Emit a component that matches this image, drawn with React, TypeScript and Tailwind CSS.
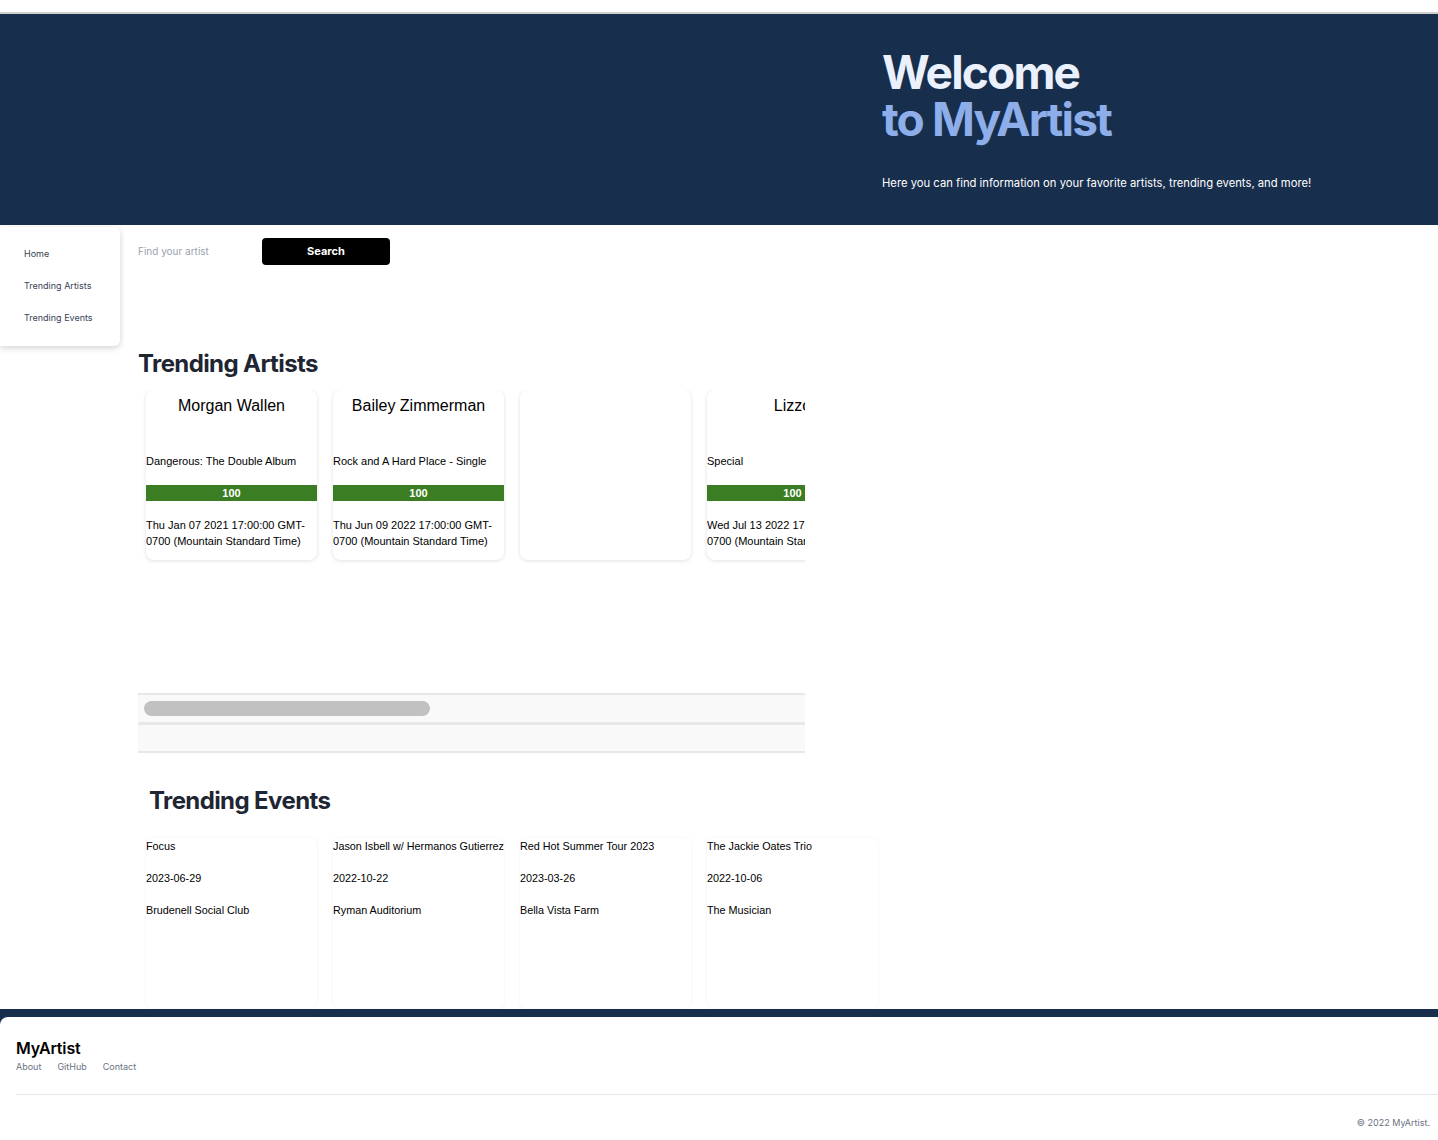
const artists = [
  { name: "Morgan Wallen", album: "Dangerous: The Double Album", score: 100, date: "Thu Jan 07 2021 17:00:00 GMT-0700 (Mountain Standard Time)" },
  { name: "Bailey Zimmerman", album: "Rock and A Hard Place - Single", score: 100, date: "Thu Jun 09 2022 17:00:00 GMT-0700 (Mountain Standard Time)" },
  null,
  { name: "Lizzo", album: "Special", score: 100, date: "Wed Jul 13 2022 17:00:00 GMT-0700 (Mountain Standard Time)" },
];

const events = [
  { name: "Focus", date: "2023-06-29", venue: "Brudenell Social Club" },
  { name: "Jason Isbell w/ Hermanos Gutierrez", date: "2022-10-22", venue: "Ryman Auditorium" },
  { name: "Red Hot Summer Tour 2023", date: "2023-03-26", venue: "Bella Vista Farm" },
  { name: "The Jackie Oates Trio", date: "2022-10-06", venue: "The Musician" },
];

const Sidebar = () => (
  <nav className="mt-[2px] w-[120px] h-[119px] shrink-0 bg-white rounded-r-md shadow-[0_2px_6px_rgba(0,0,0,0.18)] pl-6 pt-[21px] flex flex-col gap-[21px] text-[9px] leading-[11px] text-gray-700">
    <a>Home</a>
    <a>Trending Artists</a>
    <a>Trending Events</a>
  </nav>
);

type Artist = { name: string; album: string; score: number; date: string } | null;

const ArtistCard = ({ artist }: { artist: Artist }) => (
  <div className="w-[171px] h-[170px] shrink-0 bg-white rounded-lg shadow-[0_1px_4px_rgba(0,0,0,0.12)] font-['Liberation_Sans',Arial,sans-serif] text-black overflow-hidden">
    {artist && (
      <>
        <h3 className="pt-[4px] text-base leading-6 text-center">{artist.name}</h3>
        <p className="mt-[35px] text-[11px] leading-4">{artist.album}</p>
        <div className="mt-4 h-4 bg-[#3a7d22] text-white text-[11px] font-bold leading-4 text-center">{artist.score}</div>
        <p className="mt-4 text-[11px] leading-4">{artist.date}</p>
      </>
    )}
  </div>
);

const EventCard = ({ ev }: { ev: (typeof events)[number] }) => (
  <div className="w-[171px] h-[170px] shrink-0 bg-white rounded-md shadow-[0_0_3px_rgba(0,0,0,0.06)] font-['Liberation_Sans',Arial,sans-serif] text-black text-[10.8px] leading-4 whitespace-nowrap">
    <p>{ev.name}</p>
    <p className="mt-4">{ev.date}</p>
    <p className="mt-4">{ev.venue}</p>
  </div>
);

export default function App() {
  return (
    <div className="min-h-[1140px] bg-white font-['Inter',sans-serif] flex flex-col">
      <div className="h-[14px] border-b-2 border-[#cfcfcf]" />
      <header className="h-[211px] bg-[#172e4d] pl-[882px] pt-[35px]">
        <h1 className="text-[46px] leading-[47px] font-bold tracking-[-0.04em]">
          <span className="block text-[#eaf0fc]">Welcome</span>
          <span className="block text-[#8eaeea]">to MyArtist</span>
        </h1>
        <p className="mt-[32px] text-[11.25px] leading-4 text-white">
          Here you can find information on your favorite artists, trending events, and more!
        </p>
      </header>

      <div className="flex">
        <Sidebar />
        <main className="ml-[18px] flex-1">
          <div className="mt-[13px] flex items-center gap-[8px] h-[27px]">
            <input
              placeholder="Find your artist"
              className="w-[116px] text-[10px] text-gray-700 placeholder:text-gray-400 outline-none bg-transparent"
            />
            <button className="w-[128px] h-[27px] bg-black text-white text-[11px] font-bold rounded-[4px]">Search</button>
          </div>

          <h2 className="mt-[83px] text-2xl leading-8 font-bold tracking-[-0.025em] text-[#1e2533]">Trending Artists</h2>
          <div className="w-[667px] mt-[10px]">
            <div className="overflow-hidden px-2 h-[303px]">
              <div className="flex gap-4">
                {artists.map((a, i) => (
                  <ArtistCard key={i} artist={a} />
                ))}
              </div>
            </div>
            <div className="h-[29px] bg-[#f9f9f9] border-t-2 border-[#e8e8e8] pt-[6px] pl-[6px]">
              <div className="w-[286px] h-[15px] rounded-full bg-[#c1c1c1]" />
            </div>
            <div className="h-[31px] bg-[#f9f9f9] border-t-[3px] border-b-2 border-[#e8e8e8]" />
          </div>

          <h2 className="mt-[32px] ml-[11px] text-2xl leading-8 font-bold tracking-[-0.025em] text-[#1e2533]">Trending Events</h2>
          <div className="mt-[21px] px-2 flex gap-4">
            {events.map((e) => (
              <EventCard key={e.name} ev={e} />
            ))}
          </div>
        </main>
      </div>

      <footer className="mt-px bg-[#172e4d] pt-2 flex-1 flex">
        <div className="flex-1 bg-white rounded-tl-lg pl-4 pt-[21px]">
          <div className="text-base leading-5 font-semibold text-black tracking-[-0.01em]">MyArtist</div>
          <div className="mt-[3px] flex gap-4 text-[9px] leading-3 text-gray-500">
            <a>About</a>
            <a>GitHub</a>
            <a>Contact</a>
          </div>
          <hr className="mt-[21px] border-gray-200" />
          <p className="mt-[22px] pr-2 text-right text-[9px] leading-3 text-gray-500">© 2022 MyArtist.</p>
        </div>
      </footer>
    </div>
  );
}
